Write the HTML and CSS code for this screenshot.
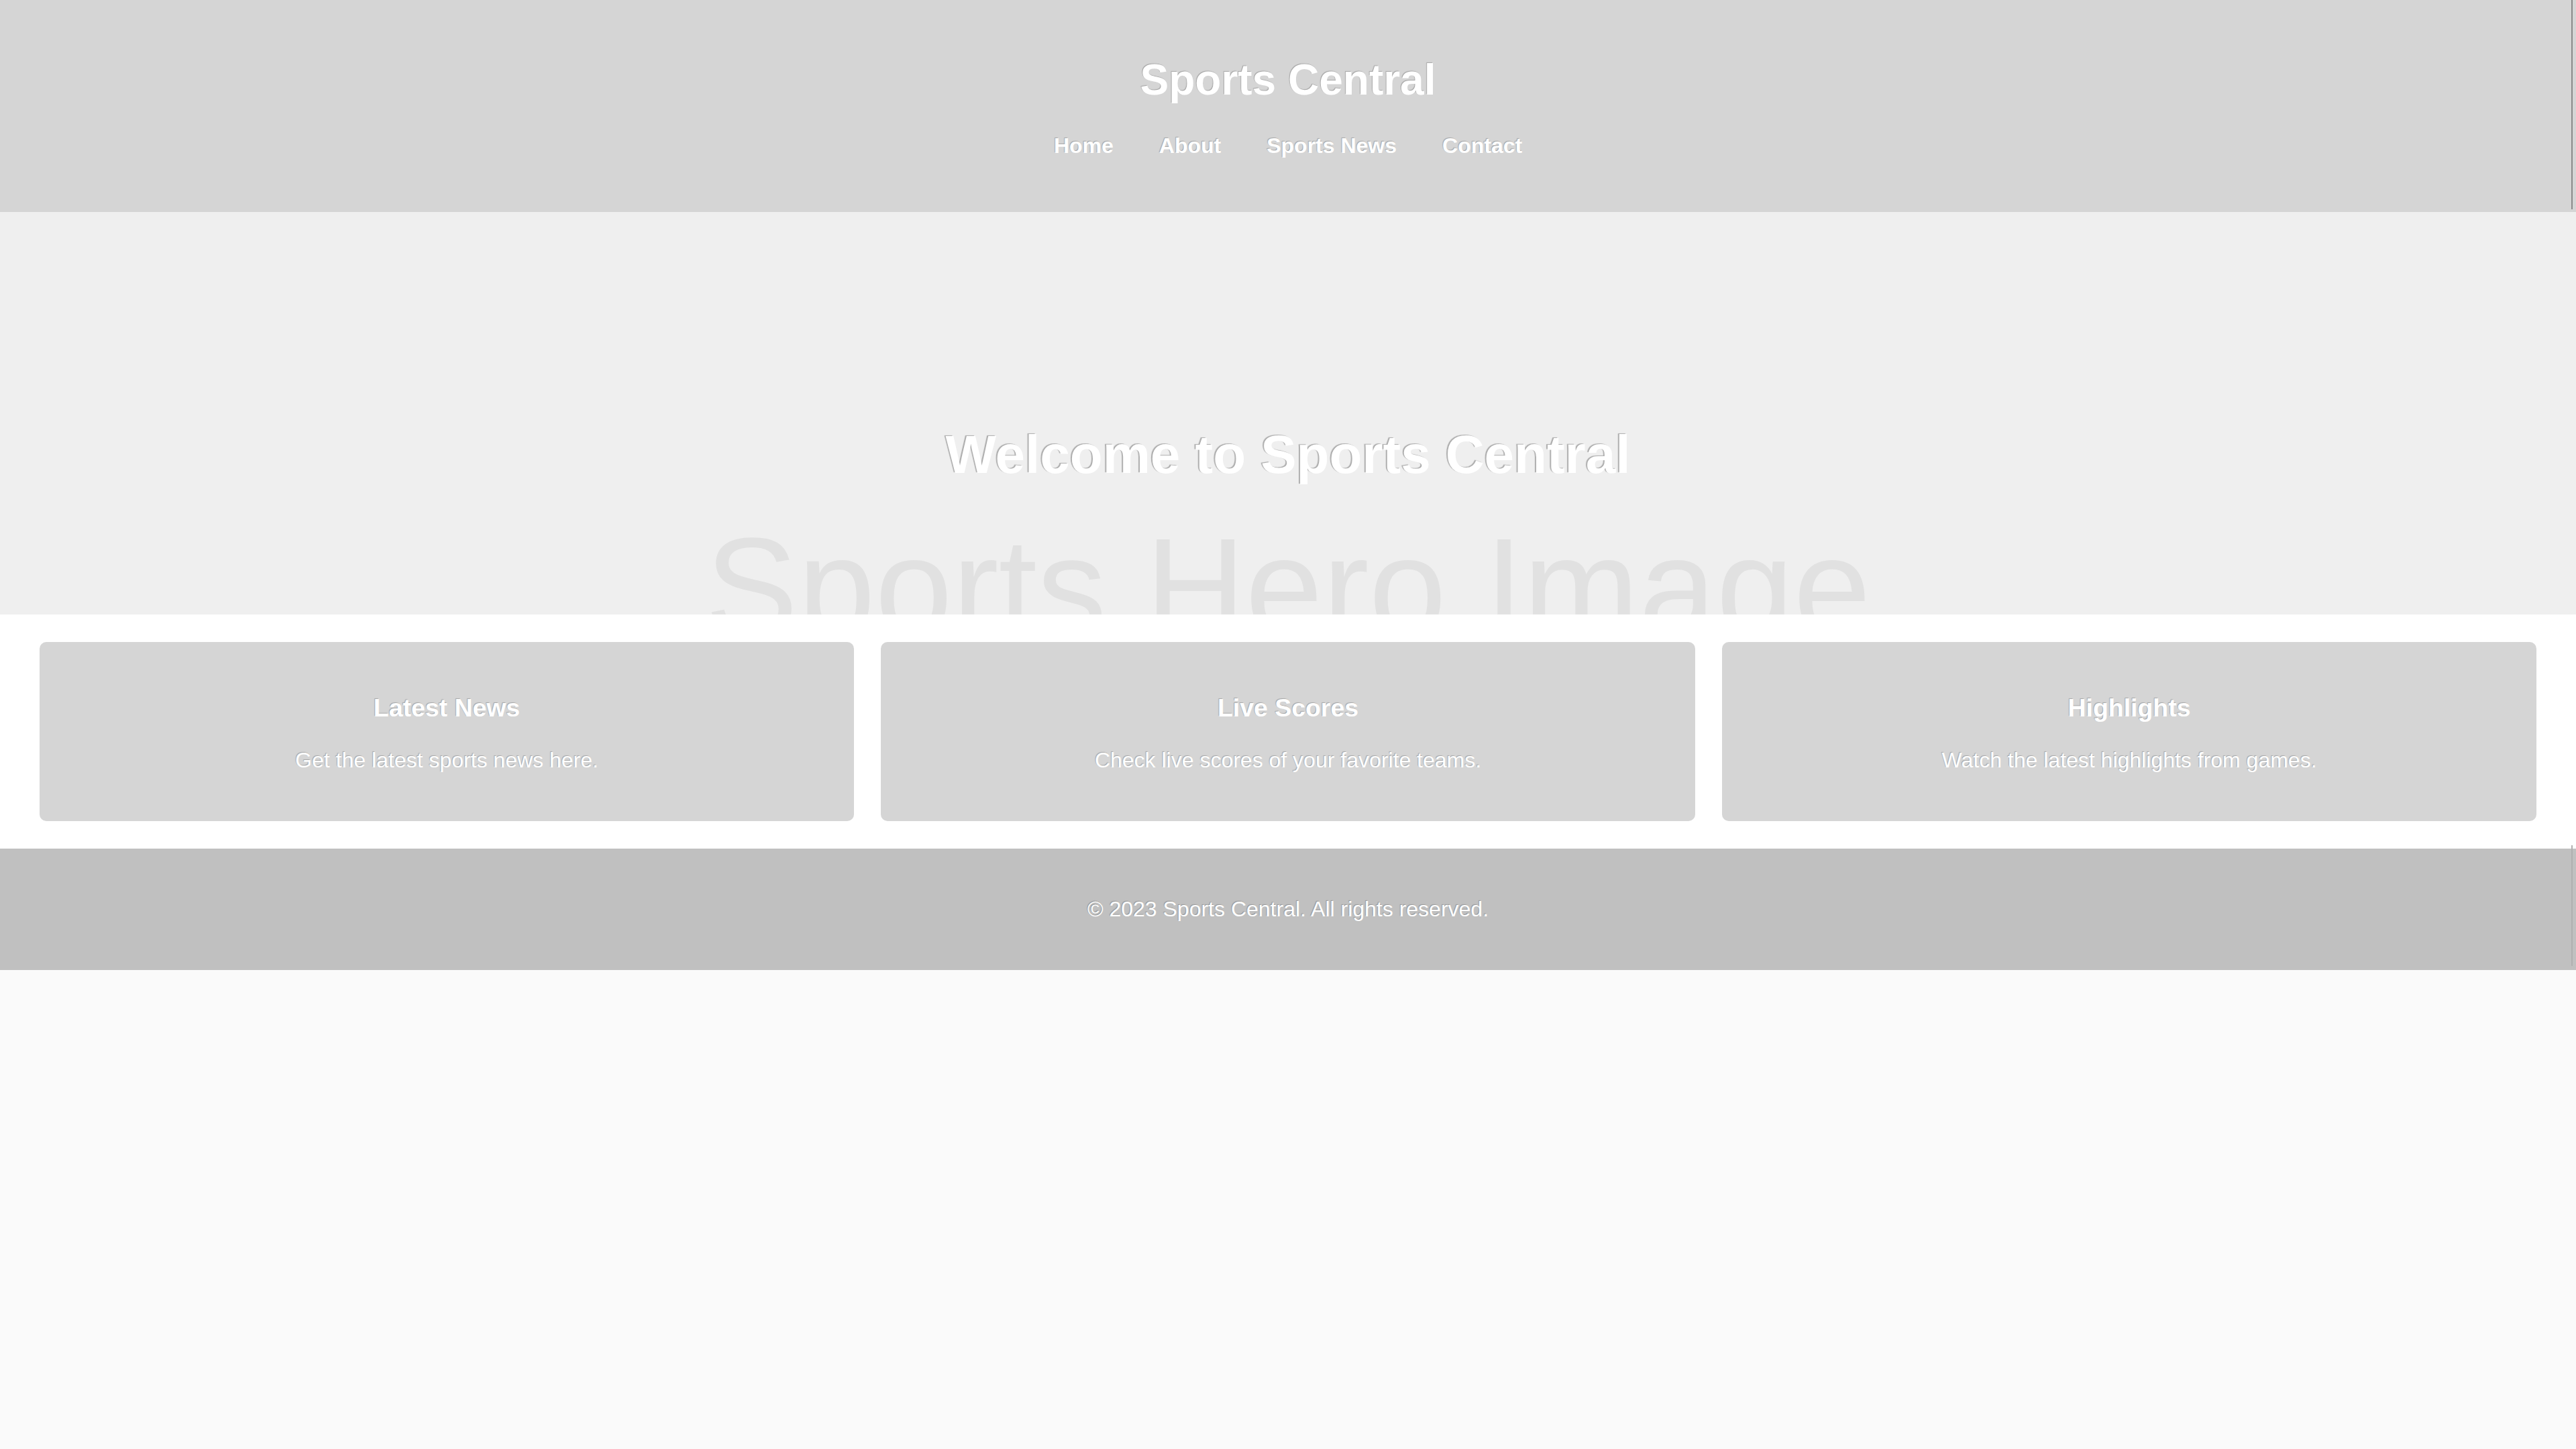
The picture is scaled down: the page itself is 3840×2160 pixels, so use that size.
FILE: index.html
```html
<!DOCTYPE html>
<html lang="en">
<head>
<meta charset="utf-8">
<title>Sports Central</title>
<link rel="stylesheet" href="styles.css">
</head>
<body>
<header class="site-header">
  <h1 class="site-title">Sports Central</h1>
  <nav class="site-nav">
    <ul class="nav-list">
      <li><a href="#" class="nav-link">Home</a></li>
      <li><a href="#" class="nav-link">About</a></li>
      <li><a href="#" class="nav-link">Sports News</a></li>
      <li><a href="#" class="nav-link">Contact</a></li>
    </ul>
  </nav>
</header>
<section class="hero">
  <div class="hero-image" aria-hidden="true">Sports Hero Image</div>
  <h1 class="hero-title">Welcome to Sports Central</h1>
</section>
<main class="cards">
  <div class="card">
    <h3 class="card-title">Latest News</h3>
    <p class="card-text">Get the latest sports news here.</p>
  </div>
  <div class="card">
    <h3 class="card-title">Live Scores</h3>
    <p class="card-text">Check live scores of your favorite teams.</p>
  </div>
  <div class="card">
    <h3 class="card-title">Highlights</h3>
    <p class="card-text">Watch the latest highlights from games.</p>
  </div>
</main>
<footer class="site-footer">
  <p class="footer-text">&copy; 2023 Sports Central. All rights reserved.</p>
</footer>
</body>
</html>
```

FILE: styles.css
```css
* {
  box-sizing: border-box;
}

html, body {
  margin: 0;
  padding: 0;
}

body {
  background: #fafafa;
  font-family: "Liberation Sans", Arial, sans-serif;
  font-size: 32px;
  color: #ffffff;
}

.site-header {
  position: relative;
  background: #d5d5d5;
  text-align: center;
  height: 316px;
  padding-top: 82px;
}

.site-header::after {
  content: "";
  position: absolute;
  top: 0;
  bottom: 4px;
  right: 5px;
  width: 2px;
  background: #8a8a8a;
}

.site-title {
  margin: 0 0 43px;
  font-size: 64px;
  font-weight: bold;
  color: #ffffff;
  text-shadow: -1px -1px 1px rgba(0, 0, 0, 0.22);
}

.site-nav {
  display: flex;
  justify-content: center;
}

.nav-list {
  list-style: none;
  margin: 0;
  padding: 0;
  display: flex;
  gap: 68px;
}

.nav-link {
  color: #ffffff;
  text-decoration: none;
  font-weight: bold;
  font-size: 32px;
  text-shadow: -1px -1px 1px rgba(0, 0, 0, 0.22);
}

.hero {
  position: relative;
  overflow: hidden;
  height: 600px;
  background: #efefef;
  padding-top: 316px;
  text-align: center;
}

.hero-image {
  position: absolute;
  left: 0;
  right: 0;
  top: 456px;
  font-size: 207px;
  line-height: 1;
  color: #e1e1e1;
  white-space: nowrap;
  text-align: center;
}

.hero-title {
  position: relative;
  margin: 0;
  font-size: 80px;
  font-weight: bold;
  color: #ffffff;
  text-shadow: -2px -1px 1px rgba(0, 0, 0, 0.28);
}

.cards {
  display: grid;
  grid-template-columns: repeat(3, 1fr);
  gap: 40px;
  padding: 41px 59px;
  background: #ffffff;
}

.card {
  background: #d5d5d5;
  border-radius: 10px;
  padding: 40px;
  text-align: center;
}

.card-title {
  margin: 37.44px 0;
  font-size: 37.44px;
  font-weight: bold;
  text-shadow: -1px -1px 1px rgba(0, 0, 0, 0.22);
}

.card-text {
  margin: 32px 0;
  font-size: 32px;
  text-shadow: -1px -1px 1px rgba(0, 0, 0, 0.22);
}

.site-footer {
  position: relative;
  background: #c0c0c0;
  text-align: center;
  padding: 40px 0;
}

.site-footer::after {
  content: "";
  position: absolute;
  top: -5px;
  bottom: 6px;
  right: 5px;
  width: 2px;
  background: #b0b0b0;
}

.footer-text {
  margin: 32px 0;
  font-size: 32px;
  text-shadow: -1px -1px 1px rgba(0, 0, 0, 0.22);
}
```
